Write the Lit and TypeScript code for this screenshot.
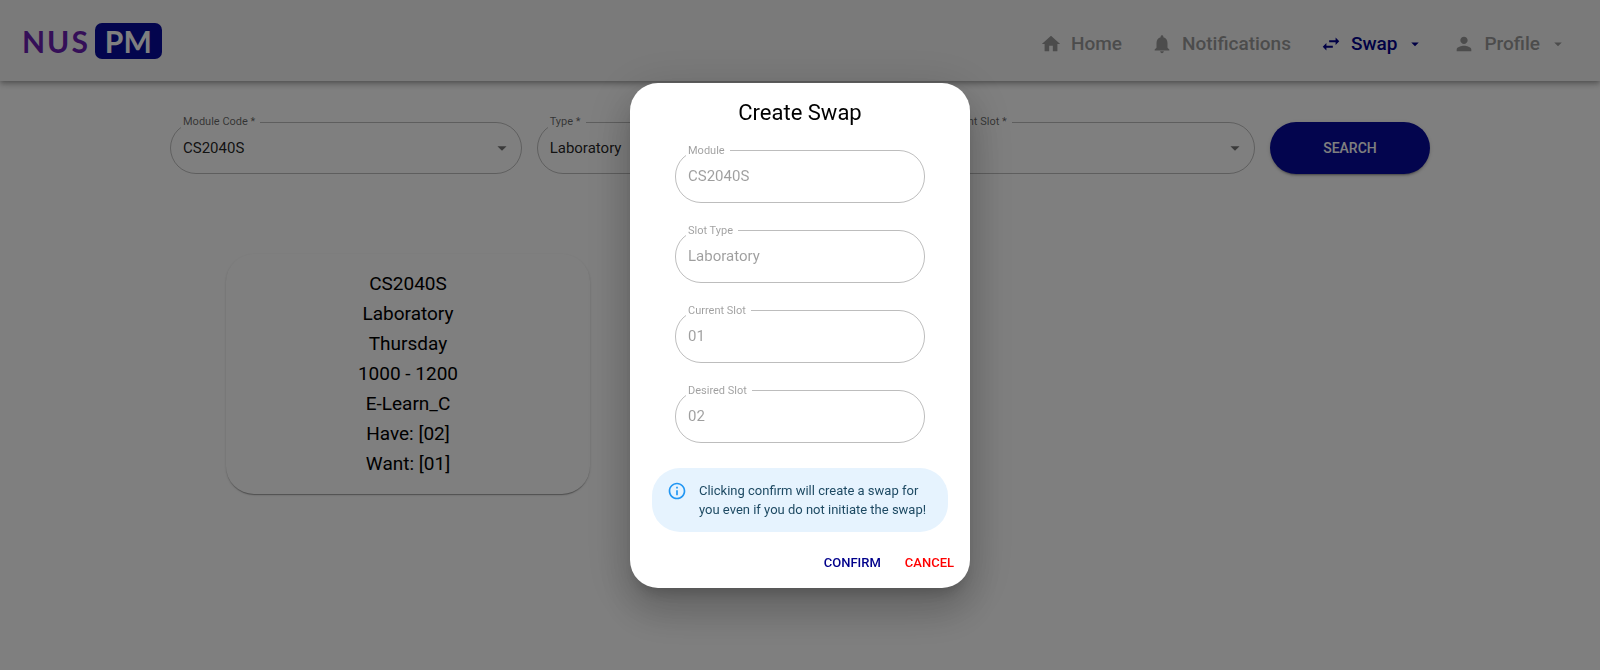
import { LitElement, html, css, svg } from "lit";
import { customElement, property } from "lit/decorators.js";

const icons = {
  home: svg`<path d="M10 20v-6h4v6h5v-8h3L12 3 2 12h3v8z"/>`,
  bell: svg`<path d="M12 22c1.1 0 2-.9 2-2h-4c0 1.1.89 2 2 2zm6-6v-5c0-3.07-1.64-5.64-4.5-6.32V4c0-.83-.67-1.5-1.5-1.5s-1.5.67-1.5 1.5v.68C7.63 5.36 6 7.92 6 11v5l-2 2v1h16v-1l-2-2z"/>`,
  swap: svg`<path d="M6.99 11L3 15l3.99 4v-3H14v-2H6.99v-3zM21 9l-3.99-4v3H10v2h7.01v3L21 9z"/>`,
  person: svg`<path d="M12 12c2.21 0 4-1.79 4-4s-1.79-4-4-4-4 1.79-4 4 1.79 4 4 4zm0 2c-2.67 0-8 1.34-8 4v2h16v-2c0-2.66-5.33-4-8-4z"/>`,
  caret: svg`<path d="M7 10l5 5 5-5z"/>`,
  info: svg`<path d="M11 7h2v2h-2zm0 4h2v6h-2zm1-9C6.48 2 2 6.48 2 12s4.48 10 10 10 10-4.48 10-10S17.52 2 12 2zm0 18c-4.41 0-8-3.59-8-8s3.59-8 8-8 8 3.59 8 8-3.59 8-8 8z"/>`,
};

type IconName = keyof typeof icons;

@customElement("app-icon")
export class AppIcon extends LitElement {
  @property() name: IconName = "home";

  static styles = css`
    :host {
      display: inline-flex;
      width: 22px;
      height: 22px;
      flex: none;
    }
    .glyph {
      width: 100%;
      height: 100%;
      fill: currentColor;
    }
  `;

  render() {
    return html`<svg class="glyph" viewBox="0 0 24 24" aria-hidden="true">${icons[this.name]}</svg>`;
  }
}

@customElement("outlined-field")
export class OutlinedField extends LitElement {
  @property() label = "";
  @property() value = "";
  @property({ type: Boolean }) select = false;
  @property({ type: Boolean }) disabled = false;

  static styles = css`
    :host {
      display: block;
      min-width: 0;
      color: rgba(0, 0, 0, 0.87);
    }
    .outline {
      display: grid;
      align-items: center;
      min-width: 0;
      margin: 0;
      padding: 0 0 6px;
      border: 1px solid rgba(0, 0, 0, 0.26);
      border-radius: 26px;
    }
    .legend {
      margin-left: 10px;
      padding: 0 5px 0 2px;
      font-size: 11px;
      line-height: 12px;
      color: rgba(0, 0, 0, 0.6);
    }
    .control {
      grid-area: 1 / 1;
      box-sizing: border-box;
      width: 100%;
      height: 39px;
      margin: 0;
      padding: 0 40px 0 12px;
      border: 0;
      outline: 0;
      background: none;
      appearance: none;
      font: 400 15px/20px Roboto, "Liberation Sans", sans-serif;
      color: inherit;
      opacity: 1;
    }
    .caret {
      grid-area: 1 / 1;
      justify-self: end;
      margin-right: 8px;
      color: rgba(0, 0, 0, 0.54);
      pointer-events: none;
    }
    .disabled,
    .disabled .legend {
      color: rgba(0, 0, 0, 0.38);
    }
  `;

  render() {
    return html`
      <fieldset class="outline ${this.disabled ? "disabled" : ""}">
        <legend class="legend"><label for="control">${this.label}</label></legend>
        ${this.select
          ? html`
              <select id="control" class="control" ?disabled=${this.disabled}>
                <option>${this.value}</option>
              </select>
              <app-icon class="caret" name="caret"></app-icon>
            `
          : html`<input id="control" class="control" type="text" .value=${this.value} ?disabled=${this.disabled} />`}
      </fieldset>
    `;
  }
}

@customElement("swap-dialog")
export class SwapDialog extends LitElement {
  private fields = [
    { label: "Module", value: "CS2040S" },
    { label: "Slot Type", value: "Laboratory" },
    { label: "Current Slot", value: "01" },
    { label: "Desired Slot", value: "02" },
  ];

  static styles = css`
    :host {
      position: fixed;
      inset: 0;
      display: flex;
      align-items: center;
      justify-content: center;
      background: rgba(0, 0, 0, 0.5);
    }
    .paper {
      box-sizing: border-box;
      width: 340px;
      max-width: calc(100% - 32px);
      border-radius: 28px;
      background: #fff;
      box-shadow: 0 11px 15px -7px rgba(0, 0, 0, 0.2), 0 24px 38px 3px rgba(0, 0, 0, 0.14),
        0 9px 46px 8px rgba(0, 0, 0, 0.12);
    }
    .title {
      margin: 0;
      padding: 15px 22px 0;
      font-size: 22px;
      line-height: 30px;
      font-weight: 400;
      text-align: center;
      color: #000;
    }
    .fields {
      display: grid;
      gap: 22px;
      padding: 17px 45px 0;
    }
    .alert {
      display: flex;
      gap: 12px;
      margin: 25px 22px 0;
      padding: 13px 15px;
      border-radius: 28px;
      background: #e6f3fe;
      font-size: 13px;
      line-height: 19px;
      color: #1e4a63;
    }
    .alert-icon {
      width: 20px;
      height: 20px;
      color: #2196f3;
    }
    .actions {
      display: flex;
      justify-content: flex-end;
      gap: 8px;
      padding: 14px 8px 8px;
    }
    .action {
      height: 34px;
      padding: 0 8px;
      border: 0;
      background: none;
      font: 500 13px/20px Roboto, "Liberation Sans", sans-serif;
      cursor: pointer;
    }
    .confirm {
      color: #00008b;
    }
    .cancel {
      color: #f00;
    }
  `;

  render() {
    return html`
      <section class="paper" role="dialog" aria-modal="true" aria-labelledby="title">
        <h2 id="title" class="title">Create Swap</h2>
        <div class="fields">
          ${this.fields.map((f) => html`<outlined-field label=${f.label} value=${f.value} disabled></outlined-field>`)}
        </div>
        <div class="alert" role="alert">
          <app-icon class="alert-icon" name="info"></app-icon>
          <span>Clicking confirm will create a swap for you even if you do not initiate the swap!</span>
        </div>
        <div class="actions">
          <button class="action confirm" type="button">CONFIRM</button>
          <button class="action cancel" type="button">CANCEL</button>
        </div>
      </section>
    `;
  }
}

@customElement("app-root")
export class AppRoot extends LitElement {
  private nav: { label: string; icon: IconName; menu?: boolean; active?: boolean }[] = [
    { label: "Home", icon: "home" },
    { label: "Notifications", icon: "bell" },
    { label: "Swap", icon: "swap", menu: true, active: true },
    { label: "Profile", icon: "person", menu: true },
  ];

  private slots = [
    ["CS2040S", "Laboratory", "Thursday", "1000 - 1200", "E-Learn_C", "Have: [02]", "Want: [01]"],
  ];

  static styles = css`
    :host {
      display: block;
      min-height: 100vh;
      background: #fff;
      font-family: Roboto, "Liberation Sans", sans-serif;
    }
    .bar {
      display: flex;
      align-items: center;
      justify-content: space-between;
      box-sizing: border-box;
      min-height: 81px;
      padding: 0 33px 0 22px;
      background: #f5f5f5;
      box-shadow: 0 2px 4px -1px rgba(0, 0, 0, 0.2), 0 4px 5px 0 rgba(0, 0, 0, 0.14),
        0 1px 10px 0 rgba(0, 0, 0, 0.12);
    }
    .logo {
      display: flex;
      align-items: center;
      gap: 5px;
      font: 700 30px/36px Lato, sans-serif;
      color: #6a1fb0;
      text-decoration: none;
    }
    .logo-name {
      letter-spacing: 2px;
    }
    .logo-badge {
      padding: 0 10px;
      border-radius: 7px;
      background: #060a9c;
      color: #fff;
    }
    .nav {
      display: flex;
      gap: 29px;
      padding-top: 7px;
    }
    .nav-link {
      display: flex;
      align-items: center;
      gap: 9px;
      font-size: 19px;
      line-height: 24px;
      font-weight: 500;
      color: #999;
      text-decoration: none;
    }
    .nav-link.active {
      color: #00008b;
    }
    .nav-caret {
      width: 18px;
      height: 18px;
    }
    .search {
      display: grid;
      grid-template-columns: repeat(3, 1fr) 160px;
      align-items: end;
      gap: 15px;
      max-width: 1260px;
      margin: 0 auto;
      padding: 35px 24px 0;
    }
    .search-button {
      height: 52px;
      border: 0;
      border-radius: 26px;
      background: #060a9c;
      box-shadow: 0 3px 1px -2px rgba(0, 0, 0, 0.2), 0 2px 2px 0 rgba(0, 0, 0, 0.14),
        0 1px 5px 0 rgba(0, 0, 0, 0.12);
      font: 500 14px/20px Roboto, "Liberation Sans", sans-serif;
      color: #fff;
      cursor: pointer;
    }
    .results {
      display: grid;
      grid-template-columns: repeat(3, 1fr);
      gap: 28px;
      max-width: 1148px;
      margin: 0 auto;
      padding: 80px 24px 24px;
    }
    .card {
      padding: 15px;
      border-radius: 28px;
      background: #fff;
      box-shadow: 0 2px 1px -1px rgba(0, 0, 0, 0.2), 0 1px 1px 0 rgba(0, 0, 0, 0.14),
        0 1px 3px 0 rgba(0, 0, 0, 0.12);
      font-size: 19px;
      line-height: 30px;
      text-align: center;
      color: #000;
    }
    .line {
      margin: 0;
    }
  `;

  render() {
    return html`
      <header class="bar">
        <a class="logo" href="#"><span class="logo-name">NUS</span><span class="logo-badge">PM</span></a>
        <nav class="nav">
          ${this.nav.map(
            (n) => html`
              <a class="nav-link ${n.active ? "active" : ""}" href="#">
                <app-icon name=${n.icon}></app-icon>
                ${n.label}
                ${n.menu ? html`<app-icon class="nav-caret" name="caret"></app-icon>` : ""}
              </a>
            `
          )}
        </nav>
      </header>
      <main>
        <form class="search">
          <outlined-field label="Module Code *" value="CS2040S" select></outlined-field>
          <outlined-field label="Type *" value="Laboratory" select></outlined-field>
          <outlined-field label="Your Current Slot *" value="01" select></outlined-field>
          <button class="search-button" type="button">SEARCH</button>
        </form>
        <section class="results">
          ${this.slots.map(
            (lines) => html`<article class="card">${lines.map((l) => html`<p class="line">${l}</p>`)}</article>`
          )}
        </section>
      </main>
      <swap-dialog></swap-dialog>
    `;
  }
}
